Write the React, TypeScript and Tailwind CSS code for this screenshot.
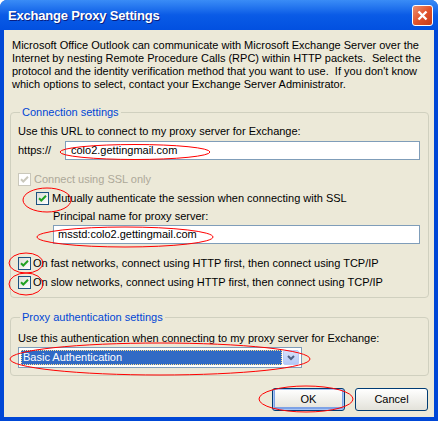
import React from 'react';

const font = { fontFamily: '"Liberation Sans", Arial, sans-serif' };

const Check: React.FC<{ disabled?: boolean }> = ({ disabled }) => (
    <span
        className={
            'flex h-[13px] w-[13px] shrink-0 items-center justify-center border ' +
            (disabled ? 'border-[#CAC8BB] bg-white' : 'border-[#1C5180] bg-gradient-to-br from-[#DCDCD7] to-white')
        }
    >
        <svg width="9" height="9" viewBox="0 0 9 9">
            <path
                d="M1 4.2 L3.3 6.5 L8 1.8"
                fill="none"
                stroke={disabled ? '#CAC8BB' : '#21A121'}
                strokeWidth="2"
            />
        </svg>
    </span>
);

const Group: React.FC<{ title: string; className?: string; children: React.ReactNode }> = ({ title, className, children }) => (
    <fieldset className={'ml-[6px] mr-[5px] rounded-[4px] border border-[#D0D0BF] px-[6px] ' + (className ?? '')}>
        <legend className="ml-[3px] px-[2px] leading-[13px] text-[#0046D5]">{title}</legend>
        {children}
    </fieldset>
);

export default function App() {
    return (
        <div className="relative h-[421px] w-[438px] overflow-hidden text-[11px] leading-[13px] text-black" style={font}>
            <div className="flex h-full flex-col rounded-t-[7px] bg-[#0047D6]">
                {/* title bar */}
                <div className="flex h-[30px] shrink-0 items-center justify-between rounded-t-[7px] bg-gradient-to-b from-[#3A8CF6] via-[#0A5BE6] to-[#0250E0] pl-[8px] pr-[5px]">
                    <span className="text-[13px] font-bold tracking-[-0.2px] text-white [text-shadow:1px_1px_0_#0A1E80]">Exchange Proxy Settings</span>
                    <span className="flex h-[21px] w-[21px] items-center justify-center rounded-[3px] border border-white bg-gradient-to-br from-[#EC8E6E] via-[#E2532B] to-[#C63C1A]">
                        <svg width="11" height="11" viewBox="0 0 11 11">
                            <path d="M1.5 1.5 L9.5 9.5 M9.5 1.5 L1.5 9.5" stroke="white" strokeWidth="2.4" />
                        </svg>
                    </span>
                </div>

                {/* body */}
                <div className="mx-[4px] mb-[4px] flex flex-1 flex-col bg-[#ECE9D8]">
                    <p className="mt-[9px] pl-[8px] pr-[6px]">
                        Microsoft Office Outlook can communicate with Microsoft Exchange Server over the Internet by nesting
                        Remote Procedure Calls (RPC) within HTTP packets.&nbsp; Select the protocol and the identity
                        verification method that you want to use.&nbsp; If you don't know which options to select, contact
                        your Exchange Server Administrator.
                    </p>

                    <Group title="Connection settings" className="mt-[15px] pb-[8px]">
                        <div className="mt-[6px] pl-[1px]">Use this URL to connect to my proxy server for Exchange:</div>
                        <div className="mt-[3px] flex items-center">
                            <span className="w-[48px] pl-[1px]">https://</span>
                            <div className="mr-[2px] flex h-[19px] flex-1 items-center border border-[#7F9DB9] bg-white pl-[5px]">
                                colo2.gettingmail.com
                            </div>
                        </div>

                        <div className="mt-[13px] flex items-center gap-[3px] pl-[1px] text-[#ACA899]">
                            <Check disabled />
                            <span>Connect using SSL only</span>
                        </div>
                        <div className="mt-[6px] flex items-center gap-[3px] pl-[19px]">
                            <Check />
                            <span>Mutually authenticate the session when connecting with SSL</span>
                        </div>
                        <div className="mt-[5px] pl-[36px]">Principal name for proxy server:</div>
                        <div className="mt-[2px] ml-[36px] mr-[2px] flex h-[19px] items-center border border-[#7F9DB9] bg-white pl-[4px]">
                            msstd:colo2.gettingmail.com
                        </div>

                        <div className="mt-[13px] flex items-center gap-[2px] pl-[1px]">
                            <Check />
                            <span>On fast networks, connect using HTTP first, then connect using TCP/IP</span>
                        </div>
                        <div className="mt-[6px] flex items-center gap-[2px] pl-[1px]">
                            <Check />
                            <span>On slow networks, connect using HTTP first, then connect using TCP/IP</span>
                        </div>
                    </Group>

                    <Group title="Proxy authentication settings" className="mt-[13px] pb-[7px]">
                        <div className="mt-[8px] pl-[1px]">Use this authentication when connecting to my proxy server for Exchange:</div>
                        <div className="mt-[2px] ml-[1px] flex h-[21px] w-[284px] items-center border border-[#7F9DB9] bg-white p-[2px]">
                            <div className="flex h-full flex-1 items-center border border-dotted border-[#FFE08A] bg-[#316AC5] pl-[1px] text-white">
                                Basic Authentication
                            </div>
                            <div className="ml-[1px] flex h-full w-[16px] items-center justify-center rounded-[2px] border border-[#B9CCF5] bg-gradient-to-b from-[#D6E2FB] to-[#B4C8F6]">
                                <svg width="8" height="6" viewBox="0 0 8 6">
                                    <path d="M1 1 L4 4 L7 1" fill="none" stroke="#4D6185" strokeWidth="2" />
                                </svg>
                            </div>
                        </div>
                    </Group>

                    <div className="mt-[12px] flex justify-end gap-[10px] pr-[6px]">
                        <button className="flex h-[23px] w-[73px] items-center justify-center rounded-[3px] border border-[#003C74] bg-gradient-to-b from-white to-[#E3E2DA] shadow-[inset_0_0_0_1px_#A8C4F4,inset_0_-1px_0_2px_#7DA2E6]">
                            OK
                        </button>
                        <button className="flex h-[23px] w-[73px] items-center justify-center rounded-[3px] border border-[#003C74] bg-gradient-to-b from-white to-[#E3E2DA]">
                            Cancel
                        </button>
                    </div>
                </div>
            </div>

            {/* red annotation marks */}
            <svg className="pointer-events-none absolute inset-0" width="438" height="421" viewBox="0 0 438 421">
                <g fill="none" stroke="#FF0000" strokeWidth="1">
                    <ellipse cx="135" cy="152" rx="75" ry="7.5" />
                    <ellipse cx="47" cy="200" rx="24" ry="12" />
                    <ellipse cx="125" cy="237" rx="88" ry="10" />
                    <ellipse cx="26" cy="263" rx="17" ry="10" />
                    <ellipse cx="26" cy="284" rx="17" ry="11" />
                    <ellipse cx="160" cy="359" rx="150" ry="16" />
                    <ellipse cx="306" cy="399" rx="47" ry="13" />
                </g>
            </svg>
        </div>
    );
}
